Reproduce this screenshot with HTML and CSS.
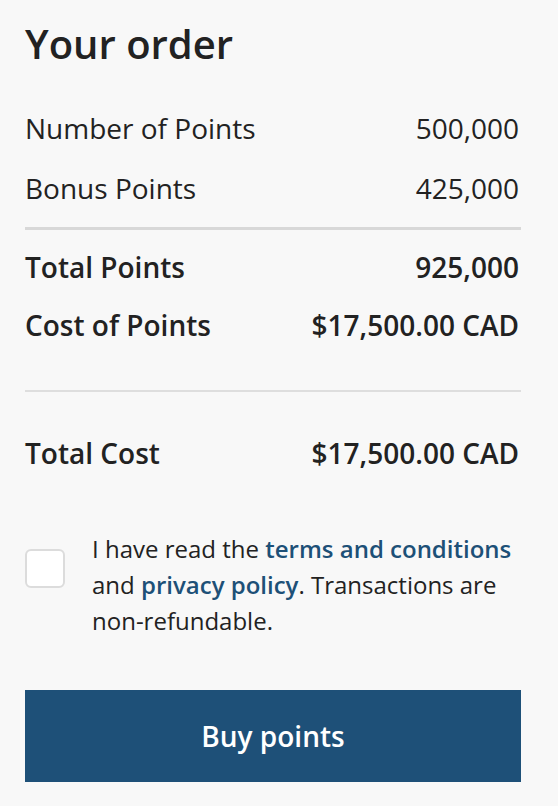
FILE: index.html
```html
<!DOCTYPE html>
<html lang="en">
<head>
<meta charset="utf-8">
<title>Your order</title>
<link rel="stylesheet" href="styles.css">
</head>
<body>
<main class="order">
  <h1 class="order-title">Your order</h1>
  <div class="rows rows-first">
    <div class="row"><span>Number of Points</span><span>500,000</span></div>
    <div class="row"><span>Bonus Points</span><span>425,000</span></div>
  </div>
  <hr class="divider divider-thick">
  <div class="rows rows-bold">
    <div class="row"><span>Total Points</span><span>925,000</span></div>
    <div class="row"><span>Cost of Points</span><span>$17,500.00 CAD</span></div>
  </div>
  <hr class="divider divider-thin">
  <div class="rows rows-bold rows-total">
    <div class="row"><span>Total Cost</span><span>$17,500.00 CAD</span></div>
  </div>
  <label class="agree">
    <span class="checkbox"></span>
    <span class="agree-text">I have read the <a href="#" class="link">terms and conditions</a> and <a href="#" class="link">privacy policy</a>. Transactions are non-refundable.</span>
  </label>
  <button class="buy" type="button">Buy points</button>
</main>
</body>
</html>
```
FILE: styles.css
```css
* { box-sizing: border-box; }
html, body {
  margin: 0;
  padding: 0;
  background: #f8f8f8;
}
body {
  font-family: "Open Sans", "Noto Sans", sans-serif;
  color: #222222;
}
.order {
  padding: 20px 37px 0 25px;
  display: flex;
  flex-direction: column;
}
.order-title {
  margin: 0;
  font-size: 40px;
  line-height: 48px;
  font-weight: 600;
  color: #222222;
}
.rows {
  display: flex;
  flex-direction: column;
}
.rows-first {
  margin-top: 30px;
}
.rows-first .row {
  line-height: 60px;
}
.row {
  display: flex;
  justify-content: space-between;
  font-size: 28px;
  line-height: 58px;
  padding-right: 2px;
}
.rows-bold .row {
  font-weight: 600;
}
.divider {
  border: 0;
  margin: 0;
  width: 100%;
}
.divider-thick {
  height: 3px;
  background: #d8d8d8;
  margin-top: 9px;
  margin-bottom: 8px;
}
.divider-thin {
  height: 2px;
  background: #dedede;
  margin-top: 36px;
  margin-bottom: 32px;
}
.agree {
  display: flex;
  align-items: flex-start;
  gap: 27px;
  margin-top: 49px;
}
.checkbox {
  flex: none;
  width: 40px;
  height: 39px;
  margin-top: 18px;
  background: #ffffff;
  border: 2px solid #dcdcdc;
  border-radius: 6px;
}
.agree-text {
  font-size: 24px;
  line-height: 36px;
  color: #222222;
}
.link {
  color: #1d5077;
  font-weight: 600;
  text-decoration: none;
}
.buy {
  margin-top: 51px;
  height: 92px;
  width: 100%;
  border: 0;
  border-radius: 0;
  background: #1e5078;
  color: #ffffff;
  font-family: "Open Sans", "Noto Sans", sans-serif;
  font-size: 28px;
  font-weight: 600;
  cursor: pointer;
}
```
